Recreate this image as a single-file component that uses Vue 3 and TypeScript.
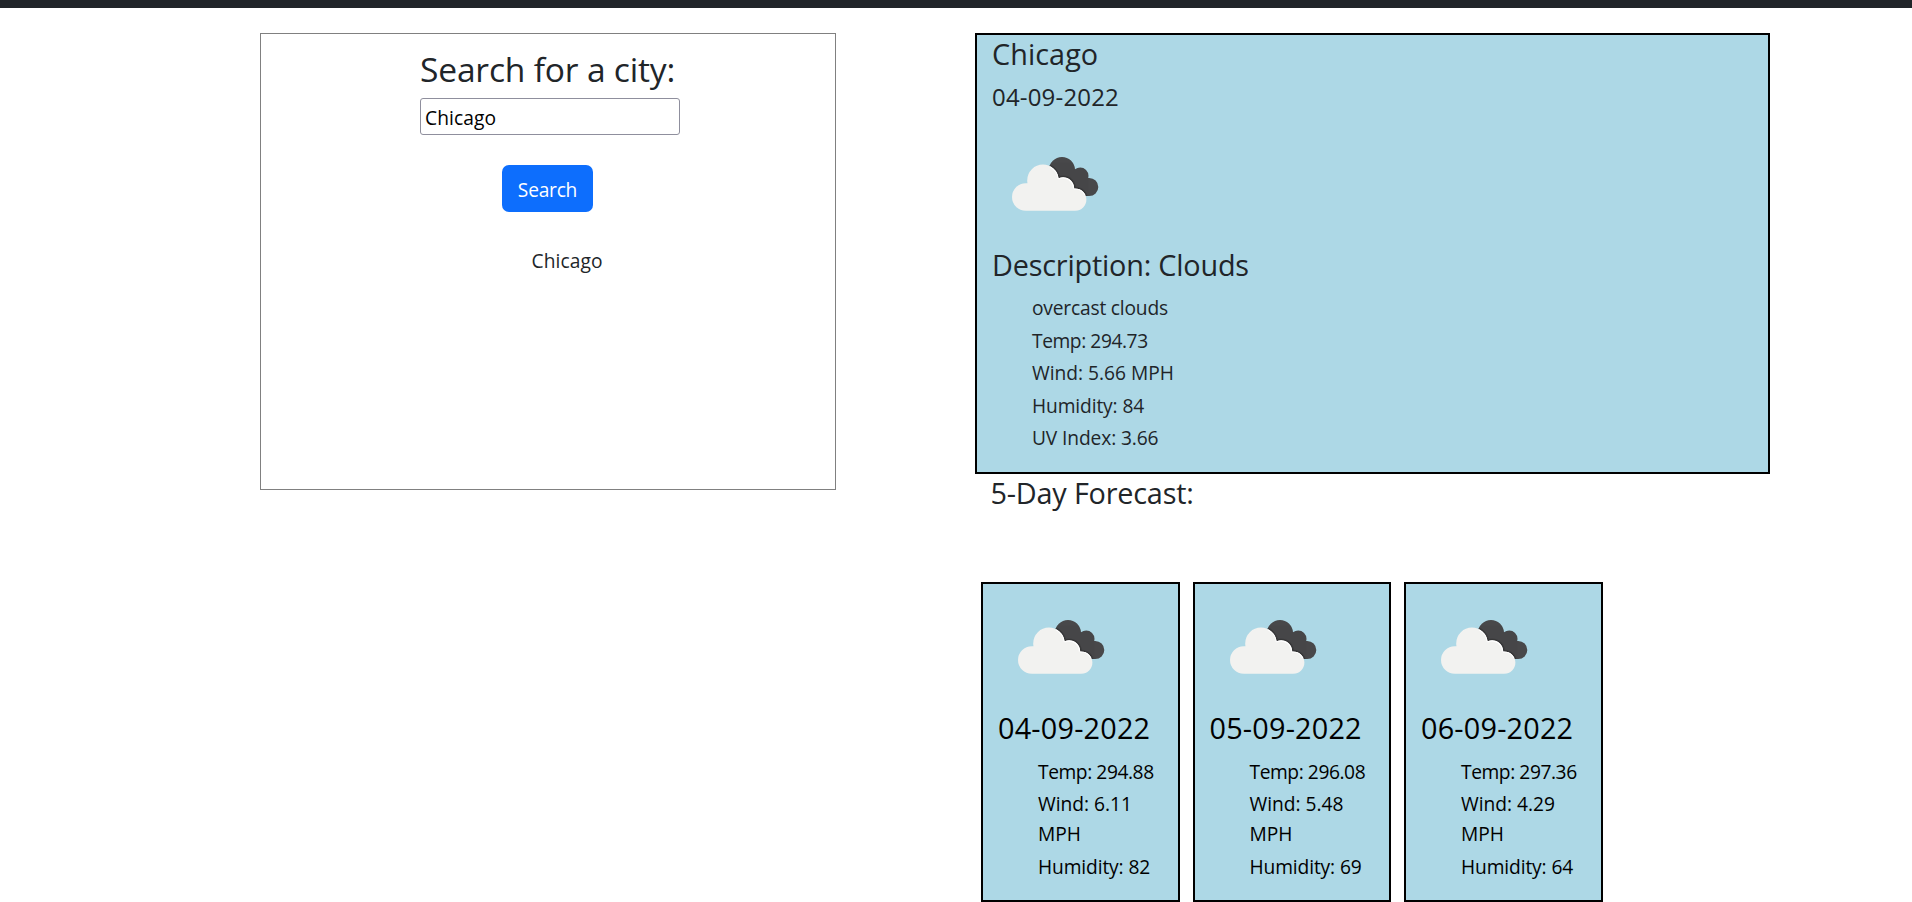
<script setup lang="ts">
import { defineComponent, h, ref } from 'vue'

interface Day {
  date: string
  temp: string
  wind: string
  humidity: number
}

const city = ref('Chicago')
const history = ref<string[]>(['Chicago'])
const details: { text: string; kind: string }[] = [
  { text: 'overcast clouds', kind: 'note' },
  { text: 'Temp: 294.73', kind: 'temp' },
  { text: 'Wind: 5.66 MPH', kind: 'wind' },
  { text: 'Humidity: 84', kind: 'humidity' },
  { text: 'UV Index: 3.66', kind: 'uv' },
]
const days: Day[] = [
  { date: '04-09-2022', temp: '294.88', wind: '6.11', humidity: 82 },
  { date: '05-09-2022', temp: '296.08', wind: '5.48', humidity: 69 },
  { date: '06-09-2022', temp: '297.36', wind: '4.29', humidity: 64 },
]

type Circle = [number, number, number]
const back: Circle[] = [[70, 48, 13], [88.2, 53.8, 8.3], [97.2, 65, 9.1]]
const front: Circle[] = [[33.8, 75, 13.8], [51, 58.4, 15.8], [71.2, 66.2, 11], [83.3, 77.6, 11.1]]
const circles = (list: Circle[], extra = 0) =>
  list.map(([cx, cy, r]) => h('circle', { cx, cy, r: r + extra }))

const CloudIcon = defineComponent({
  name: 'CloudIcon',
  setup: () => () =>
    h('svg', { width: 125, height: 125, viewBox: '0 0 125 125', 'aria-hidden': 'true' }, [
      h('defs', [
        h('clipPath', { id: 'cloud-back' }, [
          ...circles(back),
          h('path', { d: 'M62 50 L82 47 L93 57 L97 74 L78 74 Z' }),
        ]),
        h('clipPath', { id: 'cloud-front' }, [
          ...circles(front),
          h('path', { d: 'M34 64 L51 56 L66 60 L80 69 L83.3 88.7 L33.8 88.8 Z' }),
        ]),
      ]),
      h('g', { 'clip-path': 'url(#cloud-back)' }, [
        h('rect', { width: 125, height: 125, fill: '#48484a' }),
        h('g', { fill: '#303032', opacity: 0.45 }, circles(front.slice(1), 1.8)),
        h('g', { fill: '#303032', opacity: 0.6 }, circles(front.slice(1), 0.9)),
      ]),
      h('g', { 'clip-path': 'url(#cloud-front)' }, [
        h('rect', { width: 125, height: 125, fill: '#f2f2f0' }),
        h('path', {
          d: 'M58 44.5 A15.4 15.4 0 0 1 66.4 56.8 M66.4 56.8 A10.6 10.6 0 0 1 81.5 66.5 M82 67 A10.7 10.7 0 0 1 93 73',
          fill: 'none',
          stroke: '#fff',
          'stroke-width': 1.4,
        }),
      ]),
    ]),
})
</script>

<template>
  <div class="page">
    <header class="bar"></header>
    <main class="layout">
      <section class="search">
        <form class="form" @submit.prevent>
          <div class="field">
            <h2>Search for a city:</h2>
            <input v-model="city" type="text" aria-label="City" />
          </div>
          <button type="submit">Search</button>
        </form>
        <ul class="history">
          <li v-for="item in history" :key="item">{{ item }}</li>
        </ul>
      </section>
      <section class="results">
        <article class="current">
          <h3 class="city">Chicago</h3>
          <h4>04-09-2022</h4>
          <CloudIcon class="icon" />
          <h3>Description: Clouds</h3>
          <ul class="facts">
            <li v-for="line in details" :key="line.kind" :class="line.kind">{{ line.text }}</li>
          </ul>
        </article>
        <h3 class="title">5-Day Forecast:</h3>
        <div class="cards">
          <article v-for="day in days" :key="day.date" class="card">
            <CloudIcon class="icon" />
            <h3 class="date">{{ day.date }}</h3>
            <ul class="facts">
              <li class="temp">Temp: {{ day.temp }}</li>
              <li class="wind">Wind: {{ day.wind }} MPH</li>
              <li class="humidity">Humidity: {{ day.humidity }}</li>
            </ul>
          </article>
        </div>
      </section>
    </main>
  </div>
</template>

<style>
body {
  margin: 0;
  background: #fff;
}
</style>

<style scoped>
.page {
  box-sizing: border-box;
  height: 902px;
  overflow: hidden;
  color: #212529;
  font-family: 'Segoe UI', 'Open Sans', 'Noto Sans', sans-serif;
  font-size: 19.2px;
  line-height: 30px;
  letter-spacing: -0.01em;
}
.page * {
  box-sizing: border-box;
}
.bar {
  height: 8px;
  background: #212529;
}
.layout {
  display: flex;
  align-items: flex-start;
  gap: 139px;
  padding: 25px 0 0 260px;
}
h2,
h3,
h4,
ul {
  margin: 0;
  padding: 0;
  font-weight: 400;
}
ul {
  list-style: none;
}
h2 {
  font-size: 33.6px;
  line-height: 42px;
  white-space: nowrap;
}
h3 {
  font-size: 28.8px;
  line-height: 36px;
  margin-bottom: 10px;
}
h4 {
  font-size: 24px;
  line-height: 30px;
  letter-spacing: 0.18px;
  margin-bottom: 10px;
}
.icon {
  display: block;
}
.city {
  letter-spacing: 0.06px;
}
.search {
  width: 576px;
  height: 457px;
  padding-top: 14px;
  border: 1px solid #808080;
}
.form {
  display: flex;
  flex-direction: column;
  align-items: center;
}
.field {
  width: 260px;
  margin-left: 4px;
}
.field h2 {
  margin-bottom: 8px;
}
input {
  display: block;
  width: 260px;
  height: 37px;
  padding: 1px 3px 0 4px;
  border: 1px solid #8f8f9d;
  border-radius: 3px;
  color: #000;
  background: #fff;
  font: inherit;
  letter-spacing: 0.1px;
}
button {
  width: 91px;
  height: 47px;
  margin: 30px 1px 0 0;
  padding: 3px 0 0;
  border: 0;
  border-radius: 7px;
  color: #fff;
  background: #0d6efd;
  font: inherit;
  letter-spacing: -0.25px;
}
.history {
  padding: 34px 0 0 270.5px;
  letter-spacing: 0.1px;
}
.current {
  width: 795px;
  height: 441px;
  padding: 1px 15px 0;
  border: 2px solid #000;
  background: #add8e6;
}
.facts {
  padding-left: 40px;
}
.facts li {
  margin-bottom: 2.5px;
}
.facts .temp {
  letter-spacing: -0.42px;
}
.facts .wind {
  letter-spacing: 0;
}
.facts .humidity,
.facts .uv {
  letter-spacing: -0.12px;
}
.title {
  margin-bottom: 0;
  padding: 1px 0 0 15.5px;
}
.cards {
  display: flex;
  gap: 13px;
  margin: 71px 0 0 6px;
}
.card {
  width: 198.5px;
  height: 320px;
  padding: 1px 15px 0;
  border: 2px solid #000;
  color: #000;
  background: #add8e6;
}
.card .date {
  letter-spacing: 0.2px;
}
.card .facts li:first-child {
  padding-top: 0.5px;
}
</style>
